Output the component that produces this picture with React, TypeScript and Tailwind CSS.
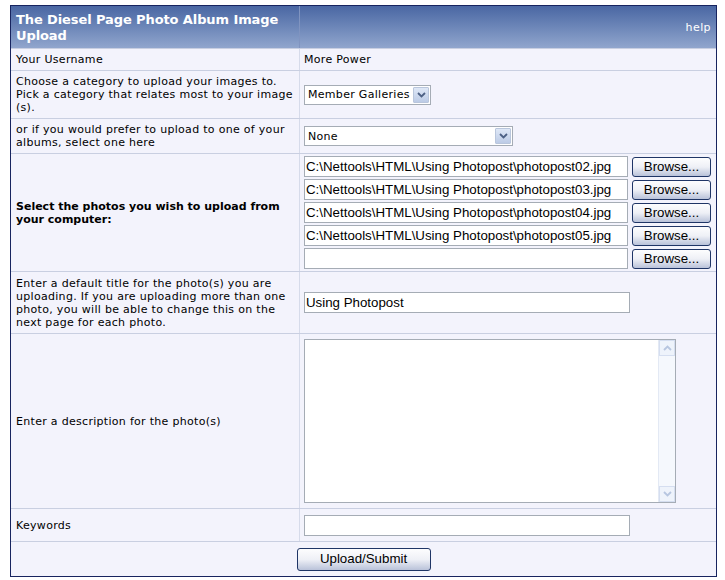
import React from 'react'

const label = "font-['DejaVu_Sans',Verdana,sans-serif] text-[11px] leading-[13px] tracking-[0.3px] text-black"
const field = "font-['Liberation_Sans',Arial,sans-serif] text-[13.3px] text-black"

const Chevron = ({ up = false, faded = false }: { up?: boolean; faded?: boolean }) => (
  <svg width="9" height="6" viewBox="0 0 9 6" className={up ? 'rotate-180' : ''}>
    <path d="M1 1 L4.5 4.5 L8 1" fill="none" stroke={faded ? '#b7c6e0' : '#4d6185'} strokeWidth="1.8" />
  </svg>
)

const SelectBox = ({ value, width }: { value: string; width: string }) => (
  <div className={`${width} h-[20px] flex items-center bg-white border border-[#a5acb5] pl-[3px] pr-[1px]`}>
    <span className={`${label} flex-1 leading-none text-[11.5px]`}>{value}</span>
    <div className="w-[16px] h-[16px] flex items-center justify-center rounded-[1px] border border-[#b9c6dc] bg-gradient-to-b from-[#dfe8f7] to-[#bccbe6]">
      <Chevron />
    </div>
  </div>
)

const TextBox = ({ value = '', width }: { value?: string; width: string }) => (
  <div className={`${width} h-[21px] flex items-center bg-white border border-[#a5acb5] px-[1px] ${field} whitespace-nowrap overflow-hidden`}>
    {value}
  </div>
)

const Button = ({ children, width }: { children: React.ReactNode; width: string }) => (
  <div
    className={`${width} h-[20px] flex items-center justify-center rounded-[3px] border border-[#1f3566] bg-gradient-to-b from-[#fdfdfe] via-[#eef0f6] to-[#b9c2d9] ${field}`}
  >
    {children}
  </div>
)

const files = [
  'C:\\Nettools\\HTML\\Using Photopost\\photopost02.jpg',
  'C:\\Nettools\\HTML\\Using Photopost\\photopost03.jpg',
  'C:\\Nettools\\HTML\\Using Photopost\\photopost04.jpg',
  'C:\\Nettools\\HTML\\Using Photopost\\photopost05.jpg',
  '',
]

const Row = ({ left, right, h, bold = false }: { left: React.ReactNode; right: React.ReactNode; h: string; bold?: boolean }) => (
  <div className={`grid grid-cols-[289px_1fr] border-t border-[#c9cfe1] ${h}`}>
    <div className={`${label} ${bold ? 'font-bold tracking-[0px]' : ''} flex items-center pl-[5px] pr-[4px] border-r border-[#d6dbea]`}>
      <div>{left}</div>
    </div>
    <div className="flex items-center pl-[4px]">{right}</div>
  </div>
)

export default function App() {
  return (
    <div className="min-h-[580px] bg-white pt-[5px] pl-[10px]">
      <div className="w-[707px] border border-[#17245f] bg-[#f3f3fc]">
        <div className="grid grid-cols-[289px_1fr] h-[42px] bg-gradient-to-b from-[#4a67a3] to-[#91a6cd]">
          <div className="flex items-center pl-[5px] pt-[2px] border-r border-[#8094c0] font-['DejaVu_Sans',Verdana,sans-serif] text-[13px] leading-[16px] tracking-[-0.1px] font-bold text-white">
            The Diesel Page Photo Album Image Upload
          </div>
          <div className="flex items-center justify-end pr-[5px] pt-[2px] font-['DejaVu_Sans',Verdana,sans-serif] text-[11px] tracking-[0.4px] text-white">
            help
          </div>
        </div>

        <Row h="h-[22px]" left="Your Username" right={<span className={label}>More Power</span>} />
        <Row
          h="h-[48px]"
          left="Choose a category to upload your images to. Pick a category that relates most to your image (s)."
          right={<SelectBox value="Member Galleries" width="w-[127px]" />}
        />
        <Row
          h="h-[35px]"
          left="or if you would prefer to upload to one of your albums, select one here"
          right={<SelectBox value="None" width="w-[209px]" />}
        />
        <Row
          h="h-[118px]"
          bold
          left="Select the photos you wish to upload from your computer:"
          right={
            <div className="flex flex-col gap-[2px]">
              {files.map((f, i) => (
                <div key={i} className="flex items-center gap-[4px]">
                  <TextBox value={f} width="w-[324px]" />
                  <Button width="w-[79px]">Browse...</Button>
                </div>
              ))}
            </div>
          }
        />
        <Row
          h="h-[62px]"
          left="Enter a default title for the photo(s) you are uploading. If you are uploading more than one photo, you will be able to change this on the next page for each photo."
          right={<TextBox value="Using Photopost" width="w-[326px]" />}
        />
        <Row
          h="h-[175px]"
          left="Enter a description for the photo(s)"
          right={
            <div className="w-[372px] h-[164px] flex bg-white border border-[#a5acb5]">
              <div className="flex-1" />
              <div className="w-[17px] flex flex-col justify-between bg-[#f5f8fd] border-l border-[#e3e9f4]">
                <div className="h-[16px] flex items-center justify-center border border-[#d5def0] bg-[#eef3fb]">
                  <Chevron up faded />
                </div>
                <div className="h-[16px] flex items-center justify-center border border-[#d5def0] bg-[#eef3fb]">
                  <Chevron faded />
                </div>
              </div>
            </div>
          }
        />
        <Row h="h-[33px]" left="Keywords" right={<TextBox width="w-[326px]" />} />
        <div className="h-[35px] flex items-center justify-center border-t border-[#c9cfe1]">
          <Button width="w-[134px] h-[23px]">Upload/Submit</Button>
        </div>
      </div>
    </div>
  )
}
